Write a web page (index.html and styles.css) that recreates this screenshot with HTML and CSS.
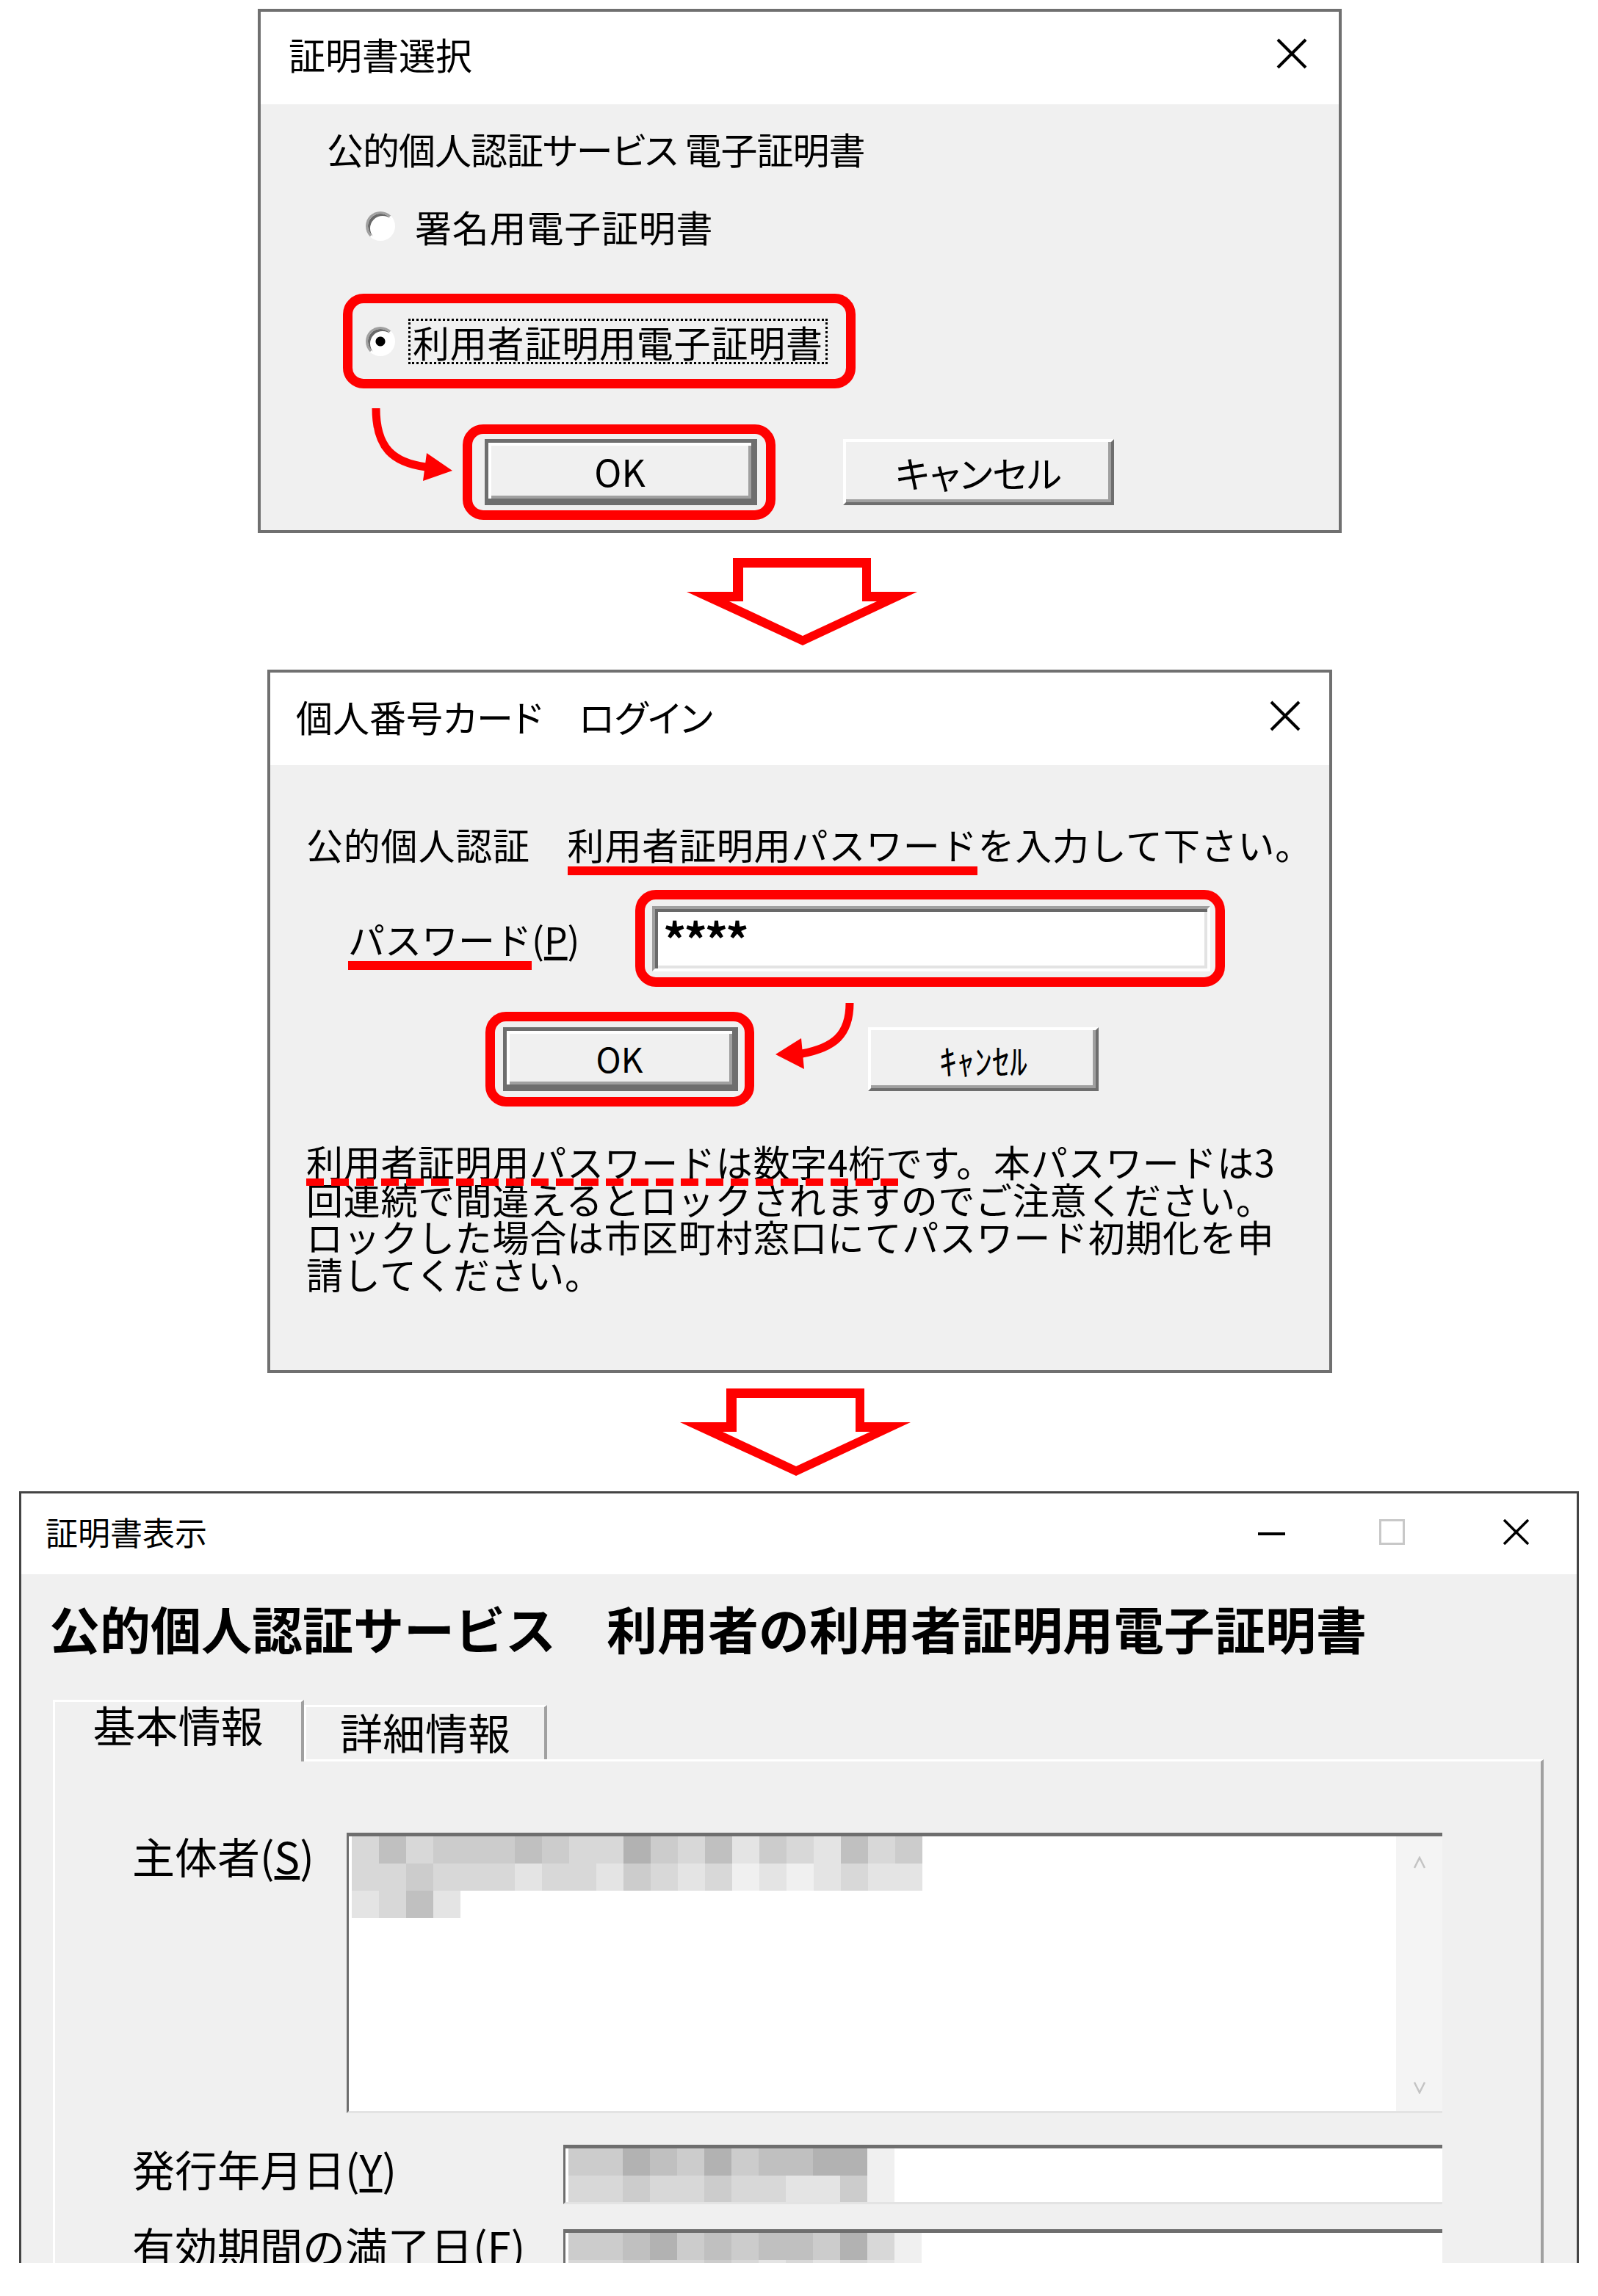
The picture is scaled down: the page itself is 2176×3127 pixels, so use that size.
FILE: index.html
```html
<!DOCTYPE html>
<html lang="ja">
<head>
    <meta charset="UTF-8">
    <title>利用者証明用電子証明書の確認手順</title>
    <link rel="stylesheet" href="styles.css">
</head>
<body>
<div class="page">

    <!-- Step 1: certificate selection -->
    <div class="dialog dialog-select">
        <div class="titlebar">
            <span class="title">証明書選択</span>
            <svg class="close" width="42" height="42" viewBox="0 0 42 42"><path d="M2 2L40 40M40 2L2 40" stroke="#000" stroke-width="4"/></svg>
        </div>
        <div class="dialog-body">
            <p class="group-label">公的個人認証サービス 電子証明書</p>
            <div class="radio-row">
                <span class="radio"></span>
                <span class="radio-text">署名用電子証明書</span>
            </div>
            <div class="mark mark-radio">
                <span class="radio checked"></span>
                <span class="radio-text focus">利用者証明用電子証明書</span>
            </div>
            <div class="button-row">
                <div class="mark mark-ok">
                    <button class="btn btn-default btn-ok">OK</button>
                </div>
                <button class="btn btn-cancel">キャンセル</button>
            </div>
            <svg class="curve curve-select" width="140" height="125" viewBox="0 0 140 125">
                <path d="M22 16C22 70 45 90 90 96" fill="none" stroke="#f00" stroke-width="11"/>
                <polygon points="91,77 126,101 86,115" fill="#f00"/>
            </svg>
        </div>
    </div>

    <svg class="down-arrow arrow-first" width="314" height="119" viewBox="0 0 314 119">
        <path fill="#f00" fill-rule="evenodd" d="M63 0H251V46H314L158 119L0 46H63Z M77 13V59H58L158 106L259 59H239V13Z"/>
    </svg>

    <!-- Step 2: PIN entry -->
    <div class="dialog dialog-login">
        <div class="titlebar">
            <span class="title">個人番号カード　ログイン</span>
            <svg class="close" width="42" height="42" viewBox="0 0 42 42"><path d="M2 2L40 40M40 2L2 40" stroke="#000" stroke-width="4"/></svg>
        </div>
        <div class="dialog-body">
            <p class="instruction">公的個人認証　<span class="red-line">利用者証明用パスワード</span>を入力して下さい。</p>
            <div class="password-row">
                <span class="pw-label"><span class="red-line">パスワード</span>(<u>P</u>)</span>
                <div class="mark mark-input">
                    <div class="input">****</div>
                </div>
            </div>
            <div class="button-row button-row-login">
                <div class="mark mark-ok-login">
                    <button class="btn btn-default btn-ok-login">OK</button>
                </div>
                <button class="btn btn-cancel-login">ｷｬﾝｾﾙ</button>
            </div>
            <p class="notice"><span class="dash-line">利用者証明用パスワードは数字4桁</span>です。本パスワードは3<br>回連続で間違えるとロックされますのでご注意ください。<br>ロックした場合は市区町村窓口にてパスワード初期化を申<br>請してください。</p>
            <svg class="curve curve-login" width="135" height="115" viewBox="0 0 135 115">
                <path d="M117 11C117 55 95 72 52 80" fill="none" stroke="#f00" stroke-width="11"/>
                <polygon points="16,81 51,59 55,101" fill="#f00"/>
            </svg>
        </div>
    </div>

    <svg class="down-arrow arrow-second" width="314" height="119" viewBox="0 0 314 119">
        <path fill="#f00" fill-rule="evenodd" d="M63 0H251V46H314L158 119L0 46H63Z M77 13V59H58L158 106L259 59H239V13Z"/>
    </svg>

    <!-- Step 3: certificate view -->
    <div class="dialog dialog-view">
        <div class="titlebar titlebar-view">
            <span class="title title-view">証明書表示</span>
            <div class="window-buttons">
                <svg width="37" height="35" viewBox="0 0 37 35"><rect x="0" y="18" width="37" height="4" fill="#000"/></svg>
                <span class="maximize"></span>
                <svg width="35" height="35" viewBox="0 0 35 35"><path d="M1 1L34 34M34 1L1 34" stroke="#000" stroke-width="3.5"/></svg>
            </div>
        </div>
        <div class="dialog-body view-body">
            <h1 class="cert-heading">公的個人認証サービス　利用者の利用者証明用電子証明書</h1>
            <div class="tabs">
                <div class="tab tab-active">基本情報</div>
                <div class="tab tab-other">詳細情報</div>
            </div>
            <div class="panel">
                <div class="field-row">
                    <span class="field-label label-subject">主体者(<u>S</u>)</span>
                    <div class="textbox">
                        <div class="textbox-content">
                            <div class="mosaic">
                                <span class="d"></span><span class="b"></span><span class="d"></span><span class="c"></span><span class="c"></span><span class="c"></span><span class="b"></span><span class="c"></span><span class="d"></span><span class="d"></span><span class="a"></span><span class="c"></span><span class="d"></span><span class="b"></span><span class="e"></span><span class="c"></span><span class="d"></span><span class="e"></span><span class="b"></span><span class="d"></span><span class="c"></span>
                                <span class="d"></span><span class="d"></span><span class="c"></span><span class="d"></span><span class="d"></span><span class="d"></span><span class="e"></span><span class="d"></span><span class="d"></span><span class="e"></span><span class="c"></span><span class="d"></span><span class="e"></span><span class="d"></span><span class="f"></span><span class="e"></span><span class="f"></span><span class="e"></span><span class="d"></span><span class="e"></span><span class="e"></span>
                                <span class="e"></span><span class="d"></span><span class="b"></span><span class="e"></span>
                            </div>
                        </div>
                        <div class="scrollbar">
                            <svg width="16" height="17" viewBox="0 0 16 17"><path d="M1 16L8 2L15 16" fill="none" stroke="#c4c4c4" stroke-width="2.5"/></svg>
                            <svg width="16" height="17" viewBox="0 0 16 17"><path d="M1 1L8 15L15 1" fill="none" stroke="#c4c4c4" stroke-width="2.5"/></svg>
                        </div>
                    </div>
                </div>
                <div class="field-row row-issued">
                    <span class="field-label label-wide">発行年月日(<u>Y</u>)</span>
                    <div class="field">
                        <div class="mosaic">
                            <span class="c"></span><span class="c"></span><span class="a"></span><span class="b"></span><span class="c"></span><span class="a"></span><span class="c"></span><span class="b"></span><span class="b"></span><span class="a"></span><span class="a"></span><span class="f"></span>
                        </div>
                        <div class="mosaic">
                            <span class="d"></span><span class="d"></span><span class="c"></span><span class="d"></span><span class="d"></span><span class="c"></span><span class="d"></span><span class="d"></span><span class="e"></span><span class="e"></span><span class="c"></span><span class="f"></span>
                        </div>
                    </div>
                </div>
                <div class="field-row row-expiry">
                    <span class="field-label label-wide">有効期間の満了日(<u>F</u>)</span>
                    <div class="field field-expiry">
                        <div class="mosaic">
                            <span class="c"></span><span class="c"></span><span class="b"></span><span class="a"></span><span class="c"></span><span class="b"></span><span class="c"></span><span class="b"></span><span class="b"></span><span class="c"></span><span class="a"></span><span class="d"></span><span class="f"></span>
                        </div>
                        <div class="mosaic">
                            <span class="d"></span><span class="d"></span><span class="c"></span><span class="d"></span><span class="d"></span><span class="c"></span><span class="d"></span><span class="e"></span><span class="d"></span><span class="e"></span><span class="d"></span><span class="e"></span><span class="f"></span>
                        </div>
                    </div>
                </div>
            </div>
        </div>
    </div>

</div>
</body>
</html>
```

FILE: styles.css
```css
body {
    margin: 0;
    background-color: #fff;
    font-family: "Noto Sans CJK JP", "Noto Sans", sans-serif;
    color: #000;
}

p, h1 {
    margin: 0;
}

.page {
    width: 2176px;
    height: 3127px;
    overflow: hidden;
    display: flex;
    flex-direction: column;
    align-items: flex-start;
}

/* window frames */

.dialog {
    box-sizing: border-box;
    border: 4px solid #707070;
    background-color: #f0f0f0;
    display: flex;
    flex-direction: column;
    flex-shrink: 0;
    font-size: 50px;
    line-height: 50px;
}

.titlebar {
    display: flex;
    align-items: center;
    justify-content: space-between;
    background-color: #fff;
    flex-shrink: 0;
    box-sizing: border-box;
}

.title {
    line-height: 1;
    font-feature-settings: "palt";
}

.dialog-body {
    position: relative;
    flex: 1;
}

.curve {
    position: absolute;
}

/* step 1 */

.dialog-select {
    margin: 12px 0 0 351px;
    width: 1476px;
    height: 714px;
}

.dialog-select .titlebar {
    height: 126px;
    padding: 0 43px 12px 38px;
}

.group-label {
    margin: 35px 0 0 90px;
    font-feature-settings: "palt";
    letter-spacing: -1px;
}

.radio-row {
    display: flex;
    align-items: center;
    height: 50px;
    margin: 56px 0 0 143px;
    gap: 27px;
}

.radio-text {
    letter-spacing: 0.8px;
}

.radio {
    box-sizing: border-box;
    width: 40px;
    height: 40px;
    border-radius: 50%;
    border: 3px solid;
    border-color: #a0a0a0 #fff #fff #a0a0a0;
    background-color: #fff;
    box-shadow: inset 3px 3px 0 #696969;
    flex-shrink: 0;
}

.radio.checked {
    background: radial-gradient(circle, #000 0 6px, #fff 7px);
}

.mark {
    box-sizing: border-box;
    border: 13px solid #ff0000;
    border-radius: 28px;
    display: flex;
    align-items: center;
}

.mark-radio {
    margin: 67px 0 0 112px;
    width: 698px;
    height: 129px;
    padding-left: 18px;
}

.focus {
    margin-left: 18px;
    padding: 3px;
    border: 3px dotted #000;
}

.button-row {
    display: flex;
    align-items: center;
    margin: 49px 0 0 275px;
    gap: 92px;
}

.mark-ok {
    width: 426px;
    height: 130px;
    padding-left: 17px;
}

.btn {
    box-sizing: border-box;
    font-family: inherit;
    color: #000;
    background-color: #f0f0f0;
    padding: 0;
    line-height: 1;
    border: 4px solid;
    border-color: #fff #6e6e6e #6e6e6e #fff;
    box-shadow: inset -4px -4px 0 #a0a0a0;
}

.btn-default {
    border: 5px solid #6e6e6e;
    border-bottom-width: 9px;
    border-right-width: 8px;
    box-shadow: inset 4px 4px 0 #fff, inset -4px -4px 0 #a0a0a0;
}

.btn-ok {
    width: 371px;
    height: 90px;
    font-size: 50px;
}

.btn-cancel {
    width: 369px;
    height: 90px;
    font-size: 50px;
    font-feature-settings: "palt";
}

.curve-select {
    left: 135px;
    top: 398px;
}

.down-arrow {
    display: block;
    flex-shrink: 0;
}

.arrow-first {
    margin: 34px 0 0 935px;
}

.arrow-second {
    margin: 21px 0 0 926px;
}

/* step 2 */

.dialog-login {
    margin: 33px 0 0 364px;
    width: 1450px;
    height: 958px;
}

.dialog-login .titlebar {
    height: 126px;
    padding: 0 39px 8px 35px;
}

.instruction {
    margin: 82px 0 0 49px;
    letter-spacing: 0.8px;
}

.red-line {
    position: relative;
}

.red-line::after {
    content: "";
    position: absolute;
    left: 0;
    right: 0;
    bottom: -7px;
    height: 12px;
    background-color: #ff0000;
}

.password-row {
    display: flex;
    align-items: center;
    margin: 38px 0 0 106px;
}

.pw-label {
    width: 391px;
    flex-shrink: 0;
}

.mark-input {
    width: 803px;
    height: 132px;
    padding-left: 10px;
}

.input {
    box-sizing: border-box;
    width: 760px;
    height: 89px;
    background-color: #fff;
    border: 4px solid;
    border-color: #a0a0a0 #fff #fff #a0a0a0;
    box-shadow: inset 4px 4px 0 #696969, inset -4px -4px 0 #e3e3e3;
    padding: 8px 0 0 11px;
    font-size: 62px;
    line-height: 1;
    font-weight: 700;
    letter-spacing: -3px;
}

.button-row-login {
    margin: 34px 0 0 293px;
    gap: 155px;
}

.mark-ok-login {
    width: 366px;
    height: 129px;
    padding-left: 11px;
}

.btn-ok-login {
    width: 320px;
    height: 87px;
    font-size: 46px;
}

.btn-cancel-login {
    width: 314px;
    height: 87px;
    font-size: 48px;
}

.notice {
    margin: 49px 0 0 49px;
    line-height: 51px;
    letter-spacing: 0.7px;
}

.dash-line {
    position: relative;
}

.dash-line::after {
    content: "";
    position: absolute;
    left: 0;
    right: -20px;
    bottom: 2px;
    height: 10px;
    background: repeating-linear-gradient(90deg, #ff0000 0 24px, transparent 24px 34px);
}

.curve-login {
    left: 672px;
    top: 313px;
}

/* step 3 */

.dialog-view {
    margin: 21px 0 0 26px;
    width: 2124px;
    height: 1051px;
    border: 3px solid #444;
    border-bottom: none;
    overflow: hidden;
}

.titlebar-view {
    height: 110px;
    padding: 0 65px 6px 33px;
}

.title-view {
    font-size: 44px;
}

.window-buttons {
    display: flex;
    align-items: center;
    gap: 128px;
}

.window-buttons svg:last-child {
    margin-left: 6px;
}

.maximize {
    box-sizing: border-box;
    width: 35px;
    height: 35px;
    border: 3px solid #c8c8c8;
}

.view-body {
    display: flex;
    flex-direction: column;
}

.cert-heading {
    margin: 39px 0 0 38px;
    font-size: 69px;
    line-height: 69px;
    font-weight: 700;
    white-space: nowrap;
}

.tabs {
    display: flex;
    align-items: flex-start;
    margin: 63px 0 0 43px;
}

.tab {
    box-sizing: border-box;
    background-color: #f0f0f0;
    border-top: 3px solid #fff;
    border-left: 3px solid #fff;
    border-right: 4px solid #a0a0a0;
    text-align: center;
    font-size: 58px;
    line-height: 58px;
}

.tab-active {
    position: relative;
    z-index: 1;
    width: 342px;
    height: 84px;
    padding-top: 1px;
}

.tab-other {
    width: 331px;
    height: 74px;
    margin-top: 7px;
    padding-top: 4px;
}

.panel {
    flex: 1;
    box-sizing: border-box;
    width: 2030px;
    margin: -3px 0 0 43px;
    border-top: 3px solid #fff;
    border-left: 3px solid #fff;
    border-right: 4px solid #a0a0a0;
    padding: 97px 0 0 105px;
    font-size: 58px;
    line-height: 58px;
}

.field-row {
    display: flex;
    align-items: flex-start;
}

.field-label {
    flex-shrink: 0;
    white-space: nowrap;
}

.label-subject {
    width: 292px;
    margin-top: 2px;
}

.label-wide {
    width: 587px;
    margin-top: 3px;
}

.textbox {
    box-sizing: border-box;
    display: flex;
    width: 1492px;
    height: 382px;
    background-color: #fff;
    border-style: solid;
    border-width: 5px 0 3px 3px;
    border-color: #6e6e6e #e3e3e3 #e3e3e3 #6e6e6e;
}

.textbox-content {
    flex: 1;
    padding-left: 4px;
}

.scrollbar {
    width: 63px;
    background-color: #f4f4f4;
    display: flex;
    flex-direction: column;
    align-items: center;
    justify-content: space-between;
    padding: 27px 0 23px;
    box-sizing: border-box;
}

.mosaic {
    display: flex;
}

.mosaic span {
    width: 37px;
    height: 37px;
    flex-shrink: 0;
}

.textbox .mosaic {
    flex-wrap: wrap;
    width: 777px;
}

.mosaic .a { background-color: #b2b2b2; }
.mosaic .b { background-color: #c0c0c0; }
.mosaic .c { background-color: #cccccc; }
.mosaic .d { background-color: #d8d8d8; }
.mosaic .e { background-color: #e4e4e4; }
.mosaic .f { background-color: #f0f0f0; }

.row-issued {
    margin-top: 43px;
}

.row-expiry {
    margin-top: 24px;
}

.field {
    box-sizing: border-box;
    width: 1197px;
    height: 81px;
    background-color: #fff;
    border-style: solid;
    border-width: 5px 0 3px 3px;
    border-color: #6e6e6e #e3e3e3 #e3e3e3 #6e6e6e;
    padding-left: 4px;
    overflow: hidden;
}

.field-expiry {
    margin-top: 10px;
}
```
